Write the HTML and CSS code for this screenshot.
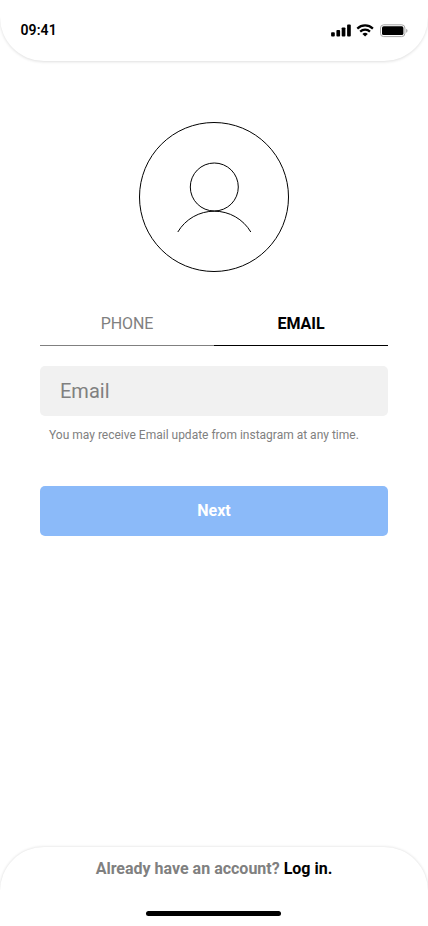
FILE: index.html
```html
<!DOCTYPE html>
<html lang="en">
<head>
<meta charset="utf-8">
<meta name="viewport" content="width=device-width, initial-scale=1">
<title>Sign up</title>
<link rel="stylesheet" href="styles.css">
</head>
<body>
<div class="screen">
  <header class="status-bar">
    <span class="time">09:41</span>
    <svg class="status-icons" width="78" height="14" viewBox="0 0 78 14" aria-hidden="true">
      <rect x="0.1" y="8.2" width="3.7" height="4.3" rx="0.9"/>
      <rect x="5.4" y="6.1" width="3.7" height="6.4" rx="0.9"/>
      <rect x="10.7" y="3.4" width="3.7" height="9.1" rx="0.9"/>
      <rect x="16.1" y="0.5" width="3.7" height="12" rx="0.9"/>
      <g fill="none" stroke="#000" stroke-width="2.2">
        <path d="M26.3 4.6a11.2 11.2 0 0 1 15.6 0"/>
        <path d="M29.2 7.6a7 7 0 0 1 9.8 0"/>
      </g>
      <path d="M31.4 10a4 4 0 0 1 5.4 0L34.1 12.6Z"/>
      <rect x="49.5" y="0.8" width="24.4" height="11.8" rx="3.2" fill="none" stroke="#a6a6a6"/>
      <rect x="51" y="2.3" width="21.4" height="8.8" rx="1.6"/>
      <path d="M75.2 4.7v4a2.2 2.2 0 0 0 0-4Z" fill="#a6a6a6"/>
    </svg>
  </header>
  <main class="content">
    <svg class="avatar" width="150" height="150" viewBox="0 0 150 150" aria-hidden="true">
      <circle cx="75" cy="75" r="74.5"/>
      <circle cx="75.3" cy="65" r="24"/>
      <path d="M38.8 110a42.4 42.4 0 0 1 73 0"/>
    </svg>
    <nav class="tabs">
      <a class="tab">PHONE</a>
      <a class="tab tab-active">EMAIL</a>
    </nav>
    <input class="field" type="email" placeholder="Email" aria-label="Email">
    <p class="hint">You may receive Email update from instagram at any time.</p>
    <button class="next" type="button">Next</button>
  </main>
  <footer class="footer">
    <p class="login">Already have an account? <a>Log in.</a></p>
    <div class="home-indicator"></div>
  </footer>
</div>
</body>
</html>
```

FILE: styles.css
```css
* {
  box-sizing: border-box;
}

body {
  margin: 0;
  background: #fff;
  color: #000;
  font-family: Roboto, sans-serif;
}

.screen {
  display: flex;
  flex-direction: column;
  height: 926px;
  overflow: hidden;
}

.status-bar {
  display: flex;
  justify-content: space-between;
  height: 61px;
  padding: 22px 19px 0 20.5px;
  border-radius: 0 0 44px 44px;
  box-shadow: 0 1px 3px rgba(0, 0, 0, 0.13);
}

.time {
  font-size: 14px;
  line-height: 16px;
  font-weight: 600;
  letter-spacing: 0.1px;
}

.status-icons {
  margin-top: 2px;
}

.content {
  display: flex;
  flex-direction: column;
  flex: 1;
  padding: 61px 40px 0;
}

.avatar {
  align-self: center;
  fill: none;
  stroke: #000;
  stroke-width: 1;
}

.tabs {
  display: grid;
  grid-template-columns: 1fr 1fr;
  margin-top: 30px;
}

.tab {
  height: 44px;
  padding: 12px 0 0;
  border-bottom: 1px solid #808080;
  color: #808080;
  font-size: 16px;
  line-height: 19px;
  letter-spacing: -0.1px;
  text-align: center;
}

.tab-active {
  border-color: #000;
  color: #000;
  font-weight: 700;
  letter-spacing: 0;
}

.field {
  height: 50px;
  margin: 20px 0 0;
  padding: 0 20px;
  border: 0;
  border-radius: 5px;
  background: #f1f1f1;
  color: #000;
  font: 400 20px/24px Roboto, sans-serif;
}

.field::placeholder {
  color: #808080;
  opacity: 1;
}

.hint {
  margin: 12px 0 0 9px;
  color: #808080;
  font-size: 12px;
  line-height: 14px;
}

.next {
  height: 50px;
  margin: 44px 0 0;
  padding: 0 0 2px;
  border: 0;
  border-radius: 5px;
  background: #8bbaf9;
  color: #fff;
  font: 700 16px/19px Roboto, sans-serif;
}

.footer {
  display: flex;
  flex-direction: column;
  align-items: center;
  height: 79px;
  padding-top: 12px;
  border-radius: 44px 44px 0 0;
  box-shadow: 0 0 3px rgba(0, 0, 0, 0.16);
}

.login {
  margin: 0;
  color: #808080;
  font-size: 16px;
  line-height: 19px;
  font-weight: 700;
}

.login a {
  color: #000;
}

.home-indicator {
  width: 135px;
  height: 5px;
  margin: 33px 1px 0 0;
  border-radius: 3px;
  background: #000;
}
```
